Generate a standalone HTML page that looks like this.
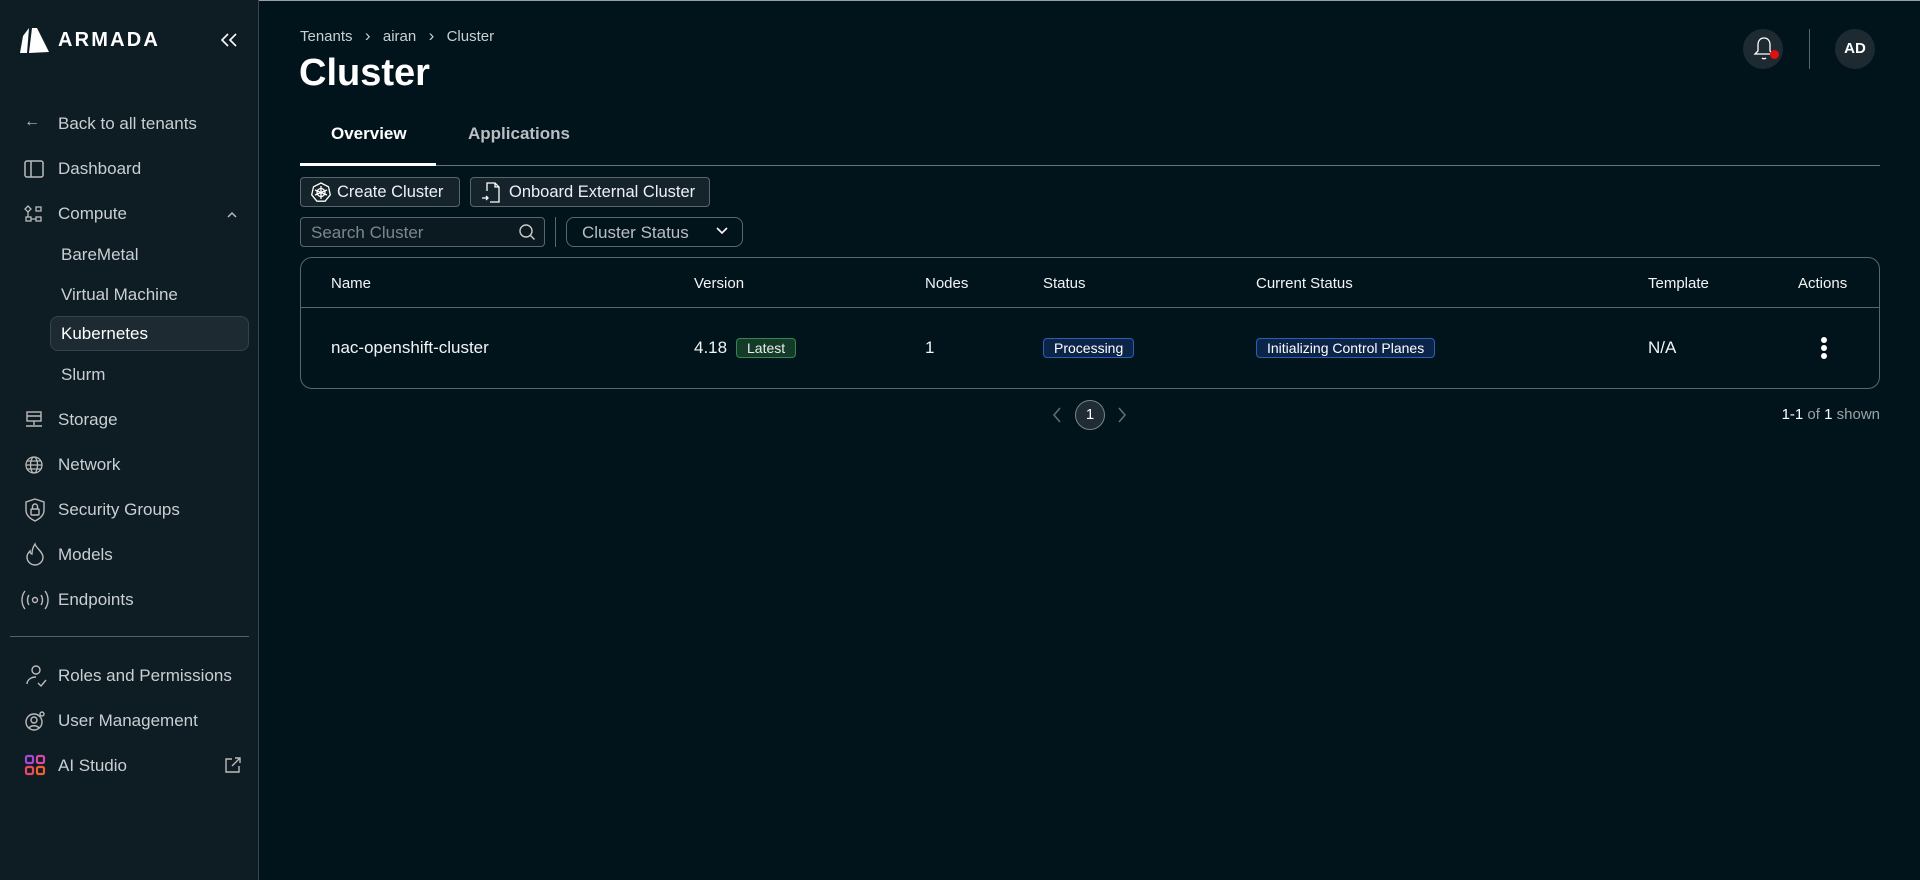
<!DOCTYPE html>
<html><head><meta charset="utf-8"><style>
*{box-sizing:border-box;margin:0;padding:0}
body{width:1920px;height:880px;background:#02141b;font-family:"Liberation Sans",sans-serif;color:#e8ecee;position:relative;overflow:hidden}
.abs{position:absolute}
.side{left:0;top:0;width:259px;height:880px;background:#0e1c23;border-right:1px solid #3a464c}
.top{left:0;top:0;width:1920px;height:1px;background:#9aa0a4}
.nav{position:absolute;left:58px;font-size:17px;color:#c9cfd2;line-height:20px}
.sub{left:61px}
.ico{position:absolute;left:24px}
.btn{position:absolute;height:30px;border:1px solid #5b666c;border-radius:4px;background:#15232b;font-size:16.5px;color:#eef;display:flex;align-items:center;padding-left:10px;gap:6px}
.th{position:absolute;top:275px;font-size:15px;color:#f2f4f5}
.td{position:absolute;top:338px;font-size:17px;color:#f2f4f5}
.tag{position:absolute;font-size:14px;border-radius:4px;padding:0 10px;height:20px;line-height:18px}
</style></head><body>
<div class="abs top"></div>
<div class="abs side">
<svg class="abs" style="left:20px;top:26px" width="30" height="29" viewBox="0 0 30 29"><path d="M3 10 L9 2 L7 27 L0 27 Z" fill="#fff"/><path d="M12 2 L17 2 L29 26 L9 27 Z" fill="#fff"/></svg>
<div class="abs" style="left:58px;top:29px;font-size:20px;font-weight:bold;letter-spacing:2.2px;color:#fff">ARMADA</div>
<svg class="abs" style="left:220px;top:32px" width="18" height="16" viewBox="0 0 18 16" fill="none" stroke="#fff" stroke-width="1.6"><path d="M8 2L2 8l6 6M16 2l-6 6 6 6"/></svg>
<div class="ico" style="top:113px;font-size:16px;color:#bbb">&#8592;</div><div class="nav" style="top:114px">Back to all tenants</div>
<svg class="ico" style="top:160px" width="20" height="18" viewBox="0 0 20 18" fill="none" stroke="#bbb" stroke-width="1.5"><rect x="1" y="1" width="18" height="16" rx="2"/><path d="M7 1v16"/></svg><div class="nav" style="top:159px">Dashboard</div>
<svg class="ico" style="top:205px" width="20" height="18" viewBox="0 0 20 18" fill="none" stroke="#bbb" stroke-width="1.3"><path d="M4 1l3 3-3 3-3-3z"/><rect x="12" y="2" width="5" height="4"/><rect x="2" y="12" width="5" height="4"/><rect x="12" y="12" width="5" height="4"/><path d="M4 7v5M7 14h5"/></svg><div class="nav" style="top:204px">Compute</div>
<svg class="abs" style="left:227px;top:211px" width="10" height="7" viewBox="0 0 10 7" fill="none" stroke="#bbb" stroke-width="1.5"><path d="M1 6l4-4 4 4"/></svg>
<div class="nav sub" style="top:245px">BareMetal</div>
<div class="nav sub" style="top:285px">Virtual Machine</div>
<div class="abs" style="left:50px;top:316px;width:199px;height:35px;background:#1d2a32;border:1px solid #34424a;border-radius:8px"></div>
<div class="nav sub" style="top:324px;color:#fff">Kubernetes</div>
<div class="nav sub" style="top:365px">Slurm</div>
<svg class="ico" style="top:410px" width="20" height="20" viewBox="0 0 20 20" fill="none" stroke="#bbb" stroke-width="1.4"><rect x="3" y="2" width="14" height="9"/><path d="M3 6h14M10 11v4M2 16h16"/></svg><div class="nav" style="top:410px">Storage</div>
<svg class="ico" style="top:455px" width="20" height="20" viewBox="0 0 20 20" fill="none" stroke="#bbb" stroke-width="1.3"><circle cx="10" cy="10" r="8"/><ellipse cx="10" cy="10" rx="3.5" ry="8"/><path d="M2 10h16M3 6h14M3 14h14"/></svg><div class="nav" style="top:455px">Network</div>
<svg class="ico" style="top:498px" width="22" height="24" viewBox="0 0 22 24" fill="none" stroke="#bbb" stroke-width="1.4"><path d="M11 1l9 3v8c0 6-5 9-9 11C7 21 2 18 2 12V4z"/><rect x="7" y="11" width="8" height="6" rx="1"/><path d="M8.5 11V8.5a2.5 2.5 0 015 0V11"/></svg><div class="nav" style="top:500px">Security Groups</div>
<svg class="ico" style="top:542px" width="22" height="24" viewBox="0 0 22 24" fill="none" stroke="#bbb" stroke-width="1.4"><path d="M11 2c1 4 8 8 8 13a8 8 0 01-16 0c0-3 2-5 3-6 0 2 1 3 2 3 0-4 1-7 3-10z"/></svg><div class="nav" style="top:545px">Models</div>
<svg class="abs" style="left:20px;top:589px" width="30" height="22" viewBox="0 0 30 22" fill="none" stroke="#bbb" stroke-width="1.4"><path d="M5 2C1 7 1 15 5 20M25 2c4 5 4 13 0 18M9 6c-2 3-2 7 0 10M21 6c2 3 2 7 0 10"/><circle cx="15" cy="11" r="2.5"/></svg><div class="nav" style="top:590px">Endpoints</div>
<div class="abs" style="left:10px;top:636px;width:239px;height:1px;background:#55606a"></div>
<svg class="ico" style="top:664px" width="24" height="24" viewBox="0 0 24 24" fill="none" stroke="#bbb" stroke-width="1.4"><circle cx="12" cy="6" r="4"/><path d="M3 20c0-4 4-7 9-7M14 19l3 3 5-6"/></svg><div class="nav" style="top:666px">Roles and Permissions</div>
<svg class="ico" style="top:710px" width="22" height="22" viewBox="0 0 22 22" fill="none" stroke="#bbb" stroke-width="1.4"><circle cx="10" cy="12" r="8"/><circle cx="10" cy="10" r="3"/><path d="M5 18c2-3 8-3 10 0"/><circle cx="18" cy="4" r="2"/></svg><div class="nav" style="top:711px">User Management</div>
<svg class="ico" style="top:754px" width="22" height="22" viewBox="0 0 22 22" fill="none" stroke-width="2.2"><rect x="2" y="2" width="7" height="7" rx="1.5" stroke="#a548d8"/><rect x="13" y="2" width="7" height="7" rx="1.5" stroke="#d848a0"/><rect x="2" y="13" width="7" height="7" rx="1.5" stroke="#e84860"/><rect x="13" y="13" width="7" height="7" rx="1.5" stroke="#f06030"/></svg><div class="nav" style="top:756px">AI Studio</div>
<svg class="abs" style="left:224px;top:756px" width="18" height="18" viewBox="0 0 18 18" fill="none" stroke="#bbb" stroke-width="1.4"><path d="M8 3H2v13h13v-6M11 2h5v5M16 2L8 10"/></svg>
</div>

<div class="abs" style="left:300px;top:26px;font-size:15px;color:#c9cfd2;word-spacing:2px">Tenants &nbsp;<span style="font-size:17px">&#8250;</span>&nbsp; airan &nbsp;<span style="font-size:17px">&#8250;</span>&nbsp; Cluster</div>
<div class="abs" style="left:299px;top:52px;font-size:38px;font-weight:bold;color:#fff">Cluster</div>
<div class="abs" style="left:331px;top:124px;font-size:17px;font-weight:bold;color:#fff">Overview</div>
<div class="abs" style="left:468px;top:124px;font-size:17px;font-weight:bold;color:#b8bec2">Applications</div>
<div class="abs" style="left:300px;top:165px;width:1580px;height:1px;background:#6a7378"></div>
<div class="abs" style="left:300px;top:163px;width:136px;height:3px;background:#fff"></div>

<div class="btn" style="left:300px;top:177px;width:160px"><svg width="20" height="20" viewBox="0 0 20 20" fill="none" stroke="#fff" stroke-width="1.3"><path d="M10 1l7.5 3.8 1.8 8-5.2 6.4H5.9L.7 12.8l1.8-8z"/><circle cx="10" cy="10.5" r="4"/><path d="M10 4v13M4 8l12 5M16 8L4 13"/></svg>Create Cluster</div>
<div class="btn" style="left:470px;top:177px;width:240px"><svg width="22" height="22" viewBox="0 0 22 22" fill="none" stroke="#fff" stroke-width="1.3"><path d="M6 10V2h8l4 4v15H9M14 2v4h4M1 17h6m-2-2l2 2-2 2"/></svg>Onboard External Cluster</div>

<div class="abs" style="left:300px;top:217px;width:245px;height:30px;border:1px solid #5b666c;border-radius:4px;background:#0b1a21"></div>
<div class="abs" style="left:311px;top:223px;font-size:17px;color:#7d878c">Search Cluster</div>
<svg class="abs" style="left:518px;top:223px" width="18" height="18" viewBox="0 0 18 18" fill="none" stroke="#ccc" stroke-width="1.4"><circle cx="8" cy="8" r="6"/><path d="M12.5 12.5l4 4"/></svg>
<div class="abs" style="left:555px;top:217px;width:1px;height:30px;background:#5b666c"></div>
<div class="abs" style="left:566px;top:217px;width:177px;height:30px;border:1px solid #5b666c;border-radius:8px"></div>
<div class="abs" style="left:582px;top:223px;font-size:17px;color:#b8bec2">Cluster Status</div>
<svg class="abs" style="left:715px;top:226px" width="14" height="10" viewBox="0 0 14 10" fill="none" stroke="#fff" stroke-width="1.6"><path d="M2 2l5 5 5-5"/></svg>

<div class="abs" style="left:300px;top:257px;width:1580px;height:132px;border:1px solid #5b666c;border-radius:12px"></div>
<div class="abs" style="left:301px;top:307px;width:1578px;height:1px;background:#5b666c"></div>
<div class="th" style="left:331px">Name</div>
<div class="th" style="left:694px">Version</div>
<div class="th" style="left:925px">Nodes</div>
<div class="th" style="left:1043px">Status</div>
<div class="th" style="left:1256px">Current Status</div>
<div class="th" style="left:1648px">Template</div>
<div class="th" style="left:1798px">Actions</div>
<div class="td" style="left:331px">nac-openshift-cluster</div>
<div class="td" style="left:694px">4.18</div>
<div class="tag" style="left:736px;top:338px;background:#153a2a;border:1px solid #2f8a4e;color:#e8f0ea">Latest</div>
<div class="td" style="left:925px">1</div>
<div class="tag" style="left:1043px;top:338px;background:#0c2448;border:1px solid #2a5fb8;color:#fff">Processing</div>
<div class="tag" style="left:1256px;top:338px;background:#0c2448;border:1px solid #2a5fb8;color:#fff">Initializing Control Planes</div>
<div class="td" style="left:1648px">N/A</div>
<div class="abs" style="left:1821px;top:337px;width:6px;height:6px;border-radius:3px;background:#fff;box-shadow:0 8px 0 #fff,0 16px 0 #fff"></div>

<svg class="abs" style="left:1052px;top:407px" width="10" height="16" viewBox="0 0 10 16" fill="none" stroke="#666f74" stroke-width="1.5"><path d="M8 1L2 8l6 7"/></svg>
<div class="abs" style="left:1075px;top:400px;width:30px;height:30px;border-radius:15px;background:#1f2c33;border:1px solid #7a8388;font-size:15px;color:#fff;text-align:center;line-height:28px">1</div>
<svg class="abs" style="left:1117px;top:407px" width="10" height="16" viewBox="0 0 10 16" fill="none" stroke="#666f74" stroke-width="1.5"><path d="M2 1l6 7-6 7"/></svg>
<div class="abs" style="left:1700px;top:406px;width:180px;text-align:right;font-size:15px;color:#9aa2a6"><span style="color:#fff">1-1</span> of <span style="color:#fff">1</span> shown</div>

<div class="abs" style="left:1743px;top:29px;width:40px;height:40px;border-radius:20px;background:#1e2a31"></div>
<svg class="abs" style="left:1752px;top:36px" width="24" height="26" viewBox="0 0 24 26" fill="none" stroke="#fff" stroke-width="1.3"><path d="M12 2c-4 0-6 3-6 7v6l-3 3h18l-3-3V9c0-4-2-7-6-7zM10 22c1 1 3 1 4 0"/></svg>
<div class="abs" style="left:1770px;top:50px;width:9px;height:9px;border-radius:5px;background:#e01010"></div>
<div class="abs" style="left:1809px;top:29px;width:1px;height:40px;background:#5b666c"></div>
<div class="abs" style="left:1835px;top:29px;width:40px;height:40px;border-radius:20px;background:#1e2a31;font-size:15px;font-weight:bold;color:#fff;text-align:center;line-height:40px">AD</div>
</body></html>
